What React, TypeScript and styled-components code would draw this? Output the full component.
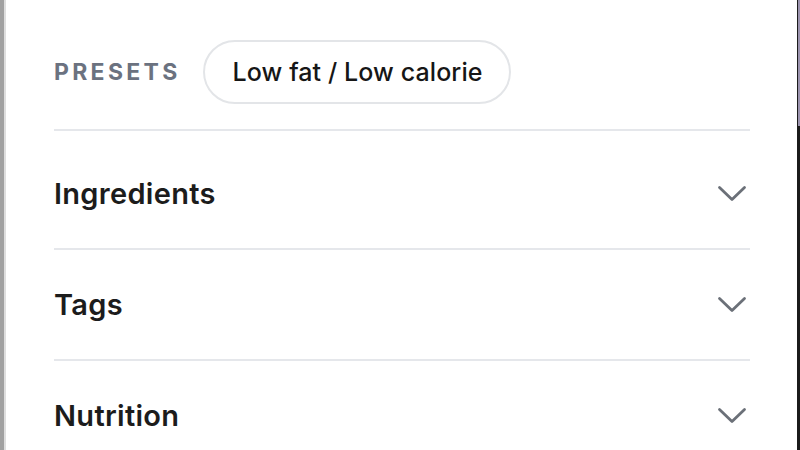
import React from "react";
import styled, { createGlobalStyle } from "styled-components";

const Global = createGlobalStyle`
  html, body { margin: 0; padding: 0; background: #ffffff; }
  body { font-family: Inter, "Noto Sans", "Liberation Sans", sans-serif; -webkit-font-smoothing: antialiased; }
  #root { height: 450px; overflow: hidden; }
`;

const Frame = styled.div`
  display: flex;
  height: 450px;
  width: 800px;
  overflow: hidden;
`;

const LeftEdge = styled.div`
  width: 4px;
  background: #a1a1a1;
  border-right: 2px solid #dedede;
  flex: none;
`;

const RightEdge = styled.div`
  width: 2px;
  flex: none;
  background: linear-gradient(to bottom, #9b93ae 0, #9b93ae 126px, #1b1b1b 126px);
  border-left: 1px solid #1b1b1b;
`;

const Panel = styled.div`
  flex: 1;
  padding: 40px 47px 0 48px;
  display: flex;
  flex-direction: column;
`;

const PresetsRow = styled.div`
  display: flex;
  align-items: center;
  gap: 22px;
  padding-bottom: 25px;
`;

const Label = styled.span`
  font-size: 23px;
  font-weight: 700;
  letter-spacing: 3.3px;
  color: #6b7280;
  text-transform: uppercase;
`;

const Chip = styled.button`
  height: 64px;
  padding: 0 26px 0 28px;
  border: 2px solid #e3e5e8;
  border-radius: 32px;
  background: #fff;
  font-family: inherit;
  font-size: 25px;
  font-weight: 500;
  letter-spacing: 0.1px;
  color: #161616;
  cursor: pointer;
`;

const Section = styled.div<{ $first?: boolean }>`
  border-top: 2px solid #e5e7eb;
  height: 109px;
  padding-top: ${(p) => (p.$first ? "8px" : "0")};
  display: flex;
  align-items: center;
  justify-content: space-between;
  flex: none;
`;

const Title = styled.span`
  font-size: 29px;
  font-weight: 600;
  color: #1c1c1c;
  letter-spacing: 0.3px;
`;

const ChevronBox = styled.span`
  display: flex;
  margin-right: 3px;
`;

const Chevron = () => (
  <ChevronBox>
    <svg width="30" height="18" viewBox="0 0 30 18" fill="none">
      <polyline
        points="2.5,2.5 15,14.5 27.5,2.5"
        stroke="#6b7078"
        strokeWidth="2.8"
        strokeLinecap="round"
        strokeLinejoin="round"
      />
    </svg>
  </ChevronBox>
);

const sections = ["Ingredients", "Tags", "Nutrition"];

export default function App() {
  return (
    <>
      <Global />
      <Frame>
        <LeftEdge />
        <Panel>
          <PresetsRow>
            <Label>Presets</Label>
            <Chip>Low fat / Low calorie</Chip>
          </PresetsRow>
          {sections.map((s, i) => (
            <Section key={s} $first={i === 0}>
              <Title>{s}</Title>
              <Chevron />
            </Section>
          ))}
        </Panel>
        <RightEdge />
      </Frame>
    </>
  );
}
